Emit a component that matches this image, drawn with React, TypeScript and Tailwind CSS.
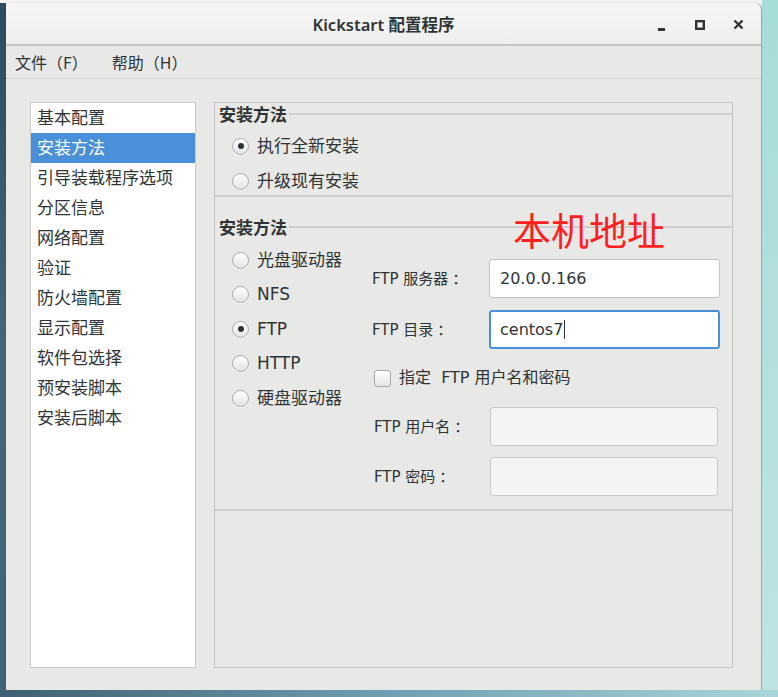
import React from "react";

const cjk = { fontFamily: '"Noto Sans CJK SC", "Noto Sans", sans-serif' };
const mixed = { fontFamily: '"DejaVu Sans", "Noto Sans CJK SC", sans-serif' };

function Radio({ checked, label }: { checked?: boolean; label: string }) {
  return (
    <div className="flex items-center h-[24px] shrink-0">
      <div className="w-[17px] h-[17px] rounded-full border border-[#a9a9a9] bg-gradient-to-b from-[#ffffff] to-[#e4e4e4] flex items-center justify-center shadow-[0_1px_0_#ffffff]">
        {checked && <div className="w-[6px] h-[6px] rounded-full bg-[#2e3436]" />}
      </div>
      <span className="ml-[8px] text-[17px] text-[#2e3436] leading-none" style={mixed}>
        {label}
      </span>
    </div>
  );
}

function SectionHeader({ title }: { title: string }) {
  return (
    <div className="flex items-center h-[20px] shrink-0">
      <span className="pl-[4px] pr-[2px] text-[17px] font-bold text-[#2e3436] leading-none" style={cjk}>
        {title}
      </span>
      <div className="flex-1 border-t-2 border-[#cfcfcf] mt-[2px]" />
    </div>
  );
}

function Label({ text, w }: { text: string; w: string }) {
  return (
    <span className={"text-[15px] text-[#2e3436] " + w} style={mixed}>
      {text}
      <span className="ml-[4px]" style={cjk}>：</span>
    </span>
  );
}

export default function App() {
  const items = [
    "基本配置",
    "安装方法",
    "引导装载程序选项",
    "分区信息",
    "网络配置",
    "验证",
    "防火墙配置",
    "显示配置",
    "软件包选择",
    "预安装脚本",
    "安装后脚本",
  ];
  return (
    <div className="w-[778px] h-[697px] flex flex-col bg-[#f2f4f4] overflow-hidden">
      <div className="h-[3px] flex shrink-0">
        <div className="w-[6px] bg-[#f2f4f4]" />
        <div className="flex-1 bg-[#f5f5f5]" />
        <div className="w-[16px] bg-[#a6dcd8]" />
      </div>
      <div className="flex h-[687px] shrink-0">
        <div className="w-[6px] bg-gradient-to-b from-[#2f4a5e] via-[#4a6578] to-[#3f6478]" />
        <div className="w-[756px] flex flex-col bg-[#e8e8e7] rounded-tr-[8px] overflow-hidden border-r border-[#9aa5a8] shadow-[1px_1px_3px_rgba(0,0,0,0.35)]">
          {/* title bar */}
          <div className="h-[43px] shrink-0 flex items-center relative bg-gradient-to-b from-[#f6f6f6] to-[#efefee] border-b-2 border-[#c6c6c6]">
            <div className="flex-1 text-center text-[16.5px] font-semibold text-[#2e3436] pt-[3px]" style={{ fontFamily: '"Noto Sans", "Noto Sans CJK SC", sans-serif' }}>
              Kickstart 配置程序
            </div>
            <div className="absolute right-0 top-0 h-full flex items-center pt-[2px]">
              <div className="w-[38px] flex justify-center">
                <svg width="10" height="12" viewBox="0 0 10 12">
                  <rect x="1" y="9" width="7" height="3" fill="#2e3436" />
                </svg>
              </div>
              <div className="w-[38px] flex justify-center">
                <svg width="10" height="10" viewBox="0 0 10 10">
                  <rect x="1.2" y="1.2" width="7.6" height="7.6" fill="none" stroke="#2e3436" strokeWidth="2.4" />
                </svg>
              </div>
              <div className="w-[42px] flex justify-center pr-[4px]">
                <svg width="11" height="11" viewBox="0 0 11 11">
                  <path d="M1.5 1.5 L9.5 9.5 M9.5 1.5 L1.5 9.5" stroke="#2e3436" strokeWidth="2.4" />
                </svg>
              </div>
            </div>
          </div>
          {/* menu bar */}
          <div className="h-[33px] shrink-0 flex items-center border-b border-[#d6d6d5] text-[16px] text-[#2e3436]" style={cjk}>
            <span className="ml-[9px]">文件（F）</span>
            <span className="ml-[24px]">帮助（H）</span>
          </div>
          {/* content */}
          <div className="flex-1 flex pt-[23px] pl-[24px] pr-[28px] pb-[22px] gap-[18px]">
            <div className="w-[166px] bg-white border border-[#c8c8c8] flex flex-col" style={cjk}>
              {items.map((t, i) => (
                <div
                  key={t}
                  className={
                    "h-[30px] shrink-0 flex items-center pl-[6px] pb-[2px] text-[17px] " +
                    (i === 1 ? "bg-[#4a90d9] text-white" : "text-[#2e3436]")
                  }
                >
                  {t}
                </div>
              ))}
            </div>
            <div className="flex-1 border border-[#c4c4c4] flex flex-col relative">
              {/* section 1 */}
              <div className="shrink-0 border-b-2 border-[#cfcfcf] flex flex-col pb-[2px]">
                <SectionHeader title="安装方法" />
                <div className="pl-[17px] mt-[11px] flex flex-col gap-[11px]">
                  <Radio checked label="执行全新安装" />
                  <Radio label="升级现有安装" />
                </div>
              </div>
              {/* section 2 */}
              <div className="mt-[19px] shrink-0 border-b-2 border-[#cfcfcf] flex flex-col pb-[13px]">
                <SectionHeader title="安装方法" />
                <div className="flex">
                  <div className="pl-[17px] w-[157px] mt-[12px] flex flex-col gap-[10.5px]">
                    <Radio label="光盘驱动器" />
                    <Radio label="NFS" />
                    <Radio checked label="FTP" />
                    <Radio label="HTTP" />
                    <Radio label="硬盘驱动器" />
                  </div>
                  <div className="flex flex-col mt-[23px]">
                    <div className="flex items-center h-[39px]">
                      <Label text="FTP 服务器" w="w-[117px]" />
                      <div className="w-[231px] h-[39px] rounded-[3px] border border-[#c2c2c2] bg-white flex items-center pl-[10px] text-[16px] text-[#2e3436]" style={mixed}>
                        20.0.0.166
                      </div>
                    </div>
                    <div className="flex items-center h-[39px] mt-[12px]">
                      <Label text="FTP 目录" w="w-[117px]" />
                      <div className="w-[231px] h-[39px] rounded-[3px] border-2 border-[#4a90d9] bg-white flex items-center pl-[9px] text-[16px] text-[#2e3436]" style={mixed}>
                        centos7<span className="w-[1px] h-[19px] bg-[#2e3436] ml-[1px]" />
                      </div>
                    </div>
                    <div className="flex items-center h-[26px] mt-[16px] pl-[2px]">
                      <div className="w-[17px] h-[17px] rounded-[3px] border border-[#a9a9a9] bg-gradient-to-b from-[#ffffff] to-[#e4e4e4]" />
                      <span className="ml-[8px] text-[16px] text-[#2e3436]" style={mixed}>指定&nbsp; FTP 用户名和密码</span>
                    </div>
                    <div className="flex items-center h-[39px] mt-[16px] pl-[2px]">
                      <Label text="FTP 用户名" w="w-[116px]" />
                      <div className="w-[228px] h-[39px] rounded-[3px] border border-[#c8c8c8] bg-[#f4f4f3]" />
                    </div>
                    <div className="flex items-center h-[39px] mt-[11px] pl-[2px]">
                      <Label text="FTP 密码" w="w-[116px]" />
                      <div className="w-[228px] h-[39px] rounded-[3px] border border-[#c8c8c8] bg-[#f4f4f3]" />
                    </div>
                  </div>
                </div>
              </div>
              <div
                className="absolute left-[298px] top-[107px] text-[38px] leading-none text-[#ff1f1f]"
                style={cjk}
              >
                本机地址
              </div>
            </div>
          </div>
        </div>
        <div className="w-[16px] bg-gradient-to-b from-[#a6dcd8] to-[#bfe3e2]" />
      </div>
      <div className="h-[7px] shrink-0 bg-gradient-to-r from-[#3f6072] via-[#6f9fb2] to-[#a8d6d8]" />
    </div>
  );
}
